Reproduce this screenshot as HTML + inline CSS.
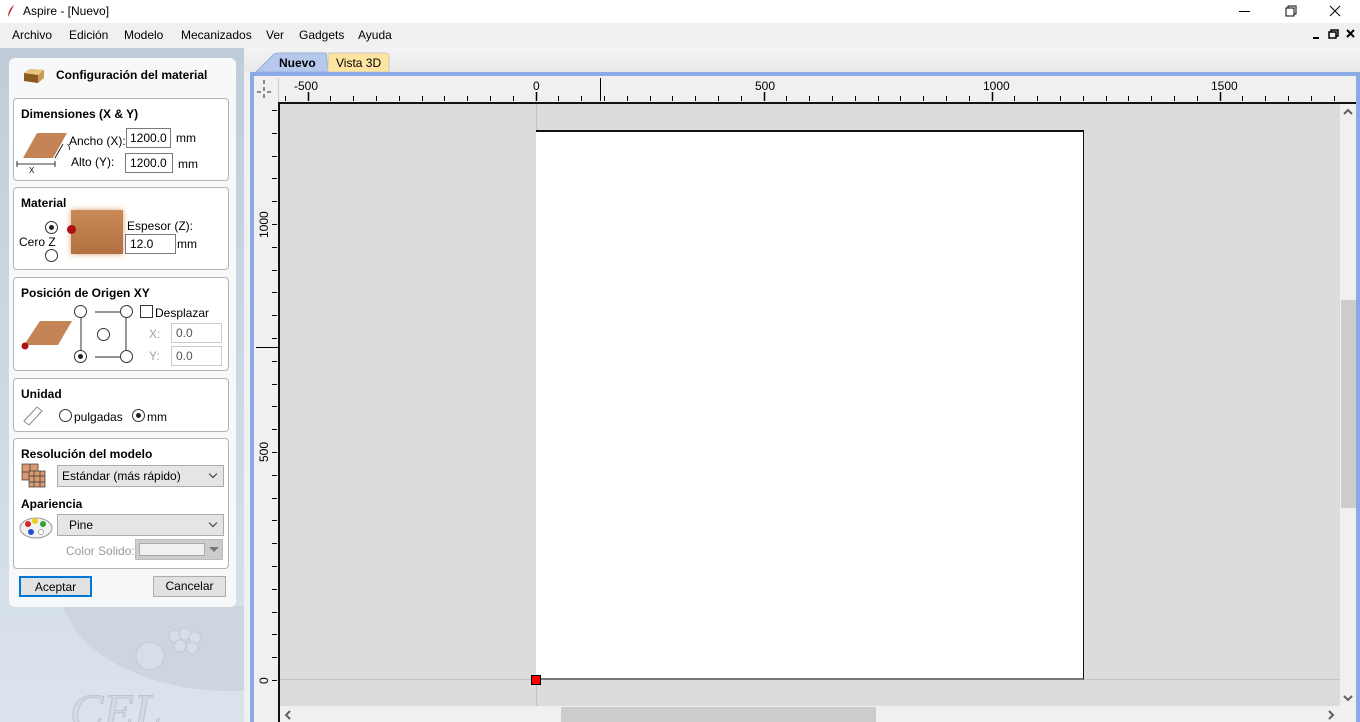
<!DOCTYPE html>
<html><head><meta charset="utf-8">
<style>
*{margin:0;padding:0;box-sizing:border-box}
body{width:1360px;height:722px;overflow:hidden;background:#f0f0f0;font-family:"Liberation Sans",sans-serif;font-size:12px;color:#000;position:relative}
.a{position:absolute}
.grp{position:absolute;left:13px;width:216px;border:1px solid #b4b4b4;border-radius:4px;background:#fff}
.gt{position:absolute;left:7px;top:8px;font-weight:bold;font-size:12px}
.inp{position:absolute;border:1px solid #7a7a7a;background:#fff;height:20px;padding:2px 4px;font-size:12px;white-space:nowrap;overflow:hidden}
.rad{position:absolute;width:13px;height:13px;border:1px solid #333;border-radius:50%;background:#fff}
.rad.on::after{content:"";position:absolute;left:3px;top:3px;width:5px;height:5px;border-radius:50%;background:#222}
.sel{position:absolute;border:1px solid #acacac;background:#e5e5e5;height:22px;padding:3px 4px;font-size:12px}
.sel::after{content:"";position:absolute;right:7px;top:5px;width:5px;height:5px;border-right:1px solid #333;border-bottom:1px solid #333;transform:rotate(45deg)}
.btn{position:absolute;border:1px solid #adadad;background:#e1e1e1;height:21px;text-align:center;line-height:19px}
</style></head><body>
<div class="a" style="left:0;top:0;width:1360px;height:23px;background:#fff"></div>
<svg class="a" style="left:6px;top:4px" width="10" height="14"><path d="M8 1 C4 4 2 8 2 13 C4 9 6 5 8 1Z" fill="#c0272d"/></svg>
<div class="a" style="left:23px;top:4px;font-size:12px">Aspire - [Nuevo]</div>
<svg class="a" style="left:1230px;top:0" width="130" height="23"><line x1="9" y1="11.5" x2="20" y2="11.5" stroke="#000"/><rect x="56" y="8" width="8" height="8" fill="none" stroke="#000"/><path d="M58 8V6h8v8h-2" fill="none" stroke="#000"/><path d="M100 6l10 10M110 6l-10 10" stroke="#000"/></svg>
<div class="a" style="left:0;top:23px;width:1360px;height:25px;background:#f0f0f0"></div>
<div class="a" style="left:12px;top:28px">Archivo</div>
<div class="a" style="left:69px;top:28px">Edición</div>
<div class="a" style="left:124px;top:28px">Modelo</div>
<div class="a" style="left:181px;top:28px">Mecanizados</div>
<div class="a" style="left:266px;top:28px">Ver</div>
<div class="a" style="left:299px;top:28px">Gadgets</div>
<div class="a" style="left:358px;top:28px">Ayuda</div>
<svg class="a" style="left:1310px;top:28px" width="50" height="14"><rect x="3" y="9" width="6" height="2" fill="#000"/><rect x="19" y="4" width="7" height="6" fill="none" stroke="#000" stroke-width="1.5"/><path d="M21 4V2h7v6h-2" fill="none" stroke="#000" stroke-width="1.5"/><path d="M37 2l7 7M44 2l-7 7" stroke="#000" stroke-width="2"/></svg>
<div class="a" style="left:0;top:48px;width:244px;height:674px;background:linear-gradient(#c0ccd8,#d0dbe6 60%,#dbe3ec)"></div>
<svg class="a" style="left:0;top:606px" width="244" height="116"><ellipse cx="230" cy="-20" rx="170" ry="105" fill="#cdd6e0"/><g fill="#d6dee7" stroke="#c0cad5"><circle cx="175" cy="30" r="6"/><circle cx="185" cy="28" r="6"/><circle cx="195" cy="32" r="6"/><circle cx="180" cy="40" r="6"/><circle cx="192" cy="42" r="6"/><circle cx="150" cy="50" r="14"/></g><text x="70" y="122" font-family="Liberation Serif" font-style="italic" font-size="50" fill="#d3dbe4" stroke="#bcc6d1">CEL</text></svg>
<div class="a" style="left:9px;top:58px;width:227px;height:549px;background:#f7f8fa;border-radius:6px"></div>
<svg class="a" style="left:22px;top:67px" width="24" height="18"><path d="M2 6 L8 2 L22 3 L22 11 L16 16 L2 14Z" fill="#c89a52"/><path d="M2 6 L16 8 L16 16 L2 14Z" fill="#8b5a1e"/><path d="M2 6L8 2L22 3L16 8Z" fill="#e6c47e"/></svg>
<div class="a" style="left:56px;top:68px;font-weight:bold">Configuración del material</div>
<div class="grp" style="top:98px;height:83px"><div class="gt">Dimensiones (X &amp; Y)</div></div>
<svg class="a" style="left:15px;top:130px" width="55" height="46"><path d="M8 28 L22 3 L52 3 L38 28Z" fill="#c48455"/><path d="M2 34 L40 34 M2 31 v6 M40 31v6" stroke="#000" stroke-width="0.8"/><text x="14" y="43" font-size="8" font-family="Liberation Sans">X</text><path d="M40 28 L48 14" stroke="#000" stroke-width="0.8"/><text x="52" y="20" font-size="8">Y</text></svg>
<div class="a" style="left:69px;top:134px">Ancho (X):</div>
<div class="inp" style="left:126px;top:128px;width:45px;padding:2px 3px">1200.0</div>
<div class="a" style="left:176px;top:131px">mm</div>
<div class="a" style="left:71px;top:155px">Alto (Y):</div>
<div class="inp" style="left:125px;top:153px;width:48px">1200.0</div>
<div class="a" style="left:178px;top:157px">mm</div>
<div class="grp" style="top:187px;height:83px"><div class="gt">Material</div></div>
<div class="rad on" style="left:45px;top:221px"></div>
<div class="a" style="left:19px;top:235px">Cero Z</div>
<div class="rad" style="left:45px;top:249px"></div>
<div class="a" style="left:71px;top:210px;width:52px;height:44px;background:linear-gradient(#c88a58,#b27040);box-shadow:0 0 6px #d9a57a"></div>
<div class="a" style="left:67px;top:225px;width:9px;height:9px;border-radius:50%;background:#b01010"></div>
<div class="a" style="left:127px;top:219px">Espesor (Z):</div>
<div class="inp" style="left:125px;top:234px;width:51px">12.0</div>
<div class="a" style="left:177px;top:237px">mm</div>
<div class="grp" style="top:277px;height:94px"><div class="gt">Posición de Origen XY</div></div>
<svg class="a" style="left:18px;top:300px" width="120" height="68"><path d="M6 45 L22 21 L54 21 L40 45Z" fill="#c48455"/><circle cx="7" cy="46" r="3.5" fill="#b01010"/><path d="M63 17V57M77 12H102M77 57H102M108 17V50" stroke="#555" stroke-width="1.2"/></svg>
<div class="rad" style="left:74px;top:305px"></div><div class="rad" style="left:120px;top:305px"></div>
<div class="rad" style="left:97px;top:328px"></div>
<div class="rad on" style="left:74px;top:350px"></div><div class="rad" style="left:120px;top:350px"></div>
<div class="a" style="left:140px;top:305px;width:13px;height:13px;border:1px solid #333;background:#fff"></div>
<div class="a" style="left:155px;top:306px">Desplazar</div>
<div class="a" style="left:149px;top:327px;color:#a0a0a0">X:</div>
<div class="inp" style="left:171px;top:323px;width:51px;border-color:#ccc;color:#555">0.0</div>
<div class="a" style="left:149px;top:349px;color:#a0a0a0">Y:</div>
<div class="inp" style="left:171px;top:346px;width:51px;border-color:#ccc;color:#555">0.0</div>
<div class="grp" style="top:378px;height:54px"><div class="gt">Unidad</div></div>
<svg class="a" style="left:22px;top:404px" width="22" height="22"><path d="M2 17 L15 3 L20 7 L7 21Z" fill="#fff" stroke="#888"/></svg>
<div class="rad" style="left:59px;top:409px"></div><div class="a" style="left:74px;top:410px">pulgadas</div>
<div class="rad on" style="left:132px;top:409px"></div><div class="a" style="left:147px;top:410px">mm</div>
<div class="grp" style="top:438px;height:131px"><div class="gt">Resolución del modelo</div></div>
<svg class="a" style="left:21px;top:463px" width="25" height="26"><rect x="1" y="1" width="16" height="16" fill="#d89a70" stroke="#333" stroke-width="0.7"/><path d="M9 1v16M1 9h16" stroke="#333" stroke-width="0.7"/><rect x="8" y="8" width="16" height="16" fill="#d89a70" stroke="#333" stroke-width="0.7"/><path d="M13 8v16M19 8v16M8 13h16M8 19h16" stroke="#333" stroke-width="0.7"/></svg>
<div class="sel" style="left:57px;top:465px;width:167px">Estándar (más rápido)</div>
<div class="a" style="left:21px;top:497px;font-weight:bold">Apariencia</div>
<svg class="a" style="left:19px;top:514px" width="34" height="26"><ellipse cx="17" cy="14" rx="16" ry="10" fill="#f2f2f2" stroke="#999"/><circle cx="9" cy="10" r="3" fill="#e02020"/><circle cx="16" cy="7" r="3" fill="#e8d020"/><circle cx="24" cy="10" r="3" fill="#30a030"/><circle cx="12" cy="18" r="3" fill="#2050d0"/><circle cx="22" cy="18" r="2.5" fill="#fff" stroke="#aaa"/></svg>
<div class="sel" style="left:57px;top:514px;width:167px;padding-left:11px">Pine</div>
<div class="a" style="left:66px;top:544px;color:#9a9a9a">Color Solido:</div>
<div class="a" style="left:135px;top:539px;width:88px;height:21px;background:#ccc;border:1px solid #bbb"><div class="a" style="left:3px;top:3px;width:66px;height:13px;background:#f0f0f0;border:1px solid #aaa"></div><div class="a" style="left:73px;top:7px;border-left:5px solid transparent;border-right:5px solid transparent;border-top:5px solid #777"></div></div>
<div class="btn" style="left:19px;top:576px;width:73px;border:2px solid #0078d7">Aceptar</div>
<div class="btn" style="left:153px;top:576px;width:73px">Cancelar</div>
<div class="a" style="left:244px;top:48px;width:1116px;height:24px;background:linear-gradient(#f4f4f4,#e8e8e8)"></div>
<svg class="a" style="left:244px;top:48px" width="160" height="26"><path d="M12 24 L30 6 Q32 5 35 5 L82 5 L84 24Z" fill="#b6c9ec" stroke="#98aed8"/><path d="M84 24 L84 6 Q84 5 86 5 L142 5 Q145 5 145 8 L145 24Z" fill="#fde5a0" stroke="#c9c9c9"/></svg>
<div class="a" style="left:279px;top:56px;font-weight:bold">Nuevo</div>
<div class="a" style="left:336px;top:56px">Vista 3D</div>
<div class="a" style="left:250px;top:72px;width:1110px;height:650px;background:#8ba9e3"></div>
<div class="a" style="left:254px;top:76px;width:1102px;height:646px;background:#f0f0f0"></div>
<div class="a" style="left:280px;top:102px;width:1076px;height:2px;background:#111"></div>
<div class="a" style="left:278px;top:78px;width:1px;height:24px;background:#ccc"></div>
<div class="a" style="left:278px;top:102px;width:2px;height:620px;background:#111"></div>
<svg class="a" style="left:256px;top:78px" width="20" height="22"><path d="M8 2v4M8 9v4M8 16v4M1 14h4M11 14h4" stroke="#222" stroke-width="1"/></svg>
<div class="a" style="left:280px;top:104px;width:1060px;height:602px;background:#dcdcdc"></div>
<div class="a" style="left:536px;top:104px;width:1px;height:602px;background:#c4c4c4"></div>
<div class="a" style="left:280px;top:679px;width:1060px;height:1px;background:#c4c4c4"></div>
<div class="a" style="left:536px;top:130px;width:548px;height:550px;background:#fff;border-top:2px solid #111;border-right:1px solid #111;border-bottom:2px solid #777"></div>
<div class="a" style="left:531px;top:675px;width:10px;height:10px;background:#f00;border:1px solid #000"></div>
<div class="a" style="left:1340px;top:104px;width:16px;height:602px;background:#f0f0f0"></div>
<div class="a" style="left:1341px;top:300px;width:15px;height:208px;background:#cdcdcd"></div>
<svg class="a" style="left:1341px;top:106px" width="14" height="12"><path d="M3 8 L7 4 L11 8" fill="none" stroke="#606060" stroke-width="2"/></svg>
<div class="a" style="left:280px;top:706px;width:1060px;height:16px;background:#f0f0f0"></div>
<div class="a" style="left:561px;top:707px;width:315px;height:15px;background:#cdcdcd"></div>
<svg class="a" style="left:283px;top:709px" width="10" height="12"><path d="M7 2 L3 6 L7 10" fill="none" stroke="#606060" stroke-width="2"/></svg>
<svg class="a" style="left:1326px;top:709px" width="10" height="12"><path d="M3 2 L7 6 L3 10" fill="none" stroke="#606060" stroke-width="2"/></svg>
<svg class="a" style="left:1341px;top:692px" width="14" height="12"><path d="M3 4 L7 8 L11 4" fill="none" stroke="#606060" stroke-width="2"/></svg>
<svg id="rul" class="a" style="left:0;top:0" width="1360" height="722"></svg>
<script>
var s='';
for(var k=0;k<48;k++){var x=Math.round(284.8+22.8*k)+.5;if(x>1352)break;var maj=(k%10==1);s+='<line x1="'+x+'" x2="'+x+'" y1="'+(maj?92:96)+'" y2="101" stroke="#000" stroke-width="'+(maj?1.5:1)+'"/>';}
[-500,0,500,1000,1500].forEach(function(v){var x=536+0.456*v;s+='<text x="'+(x-(v<0?14:(v==0?3:9)))+'" y="90" font-size="12" font-family="Liberation Sans" fill="#000">'+v+'</text>';});
s+='<line x1="600.5" x2="600.5" y1="78" y2="101" stroke="#000"/>';
for(var k=0;k<30;k++){var y=Math.round(680-22.8*k)+.5;if(y<106)break;s+='<line x1="272" x2="277" y1="'+y+'" y2="'+y+'" stroke="#000"/>';}
[0,500,1000].forEach(function(v){var y=680-0.456*v;s+='<text transform="translate(268,'+(y+(v==0?4:(v==500?10:14)))+') rotate(-90)" font-size="12" font-family="Liberation Sans">'+v+'</text>';});
s+='<line x1="256" x2="278" y1="347.5" y2="347.5" stroke="#000"/>';
document.getElementById('rul').innerHTML=s;
</script>
</body></html>
